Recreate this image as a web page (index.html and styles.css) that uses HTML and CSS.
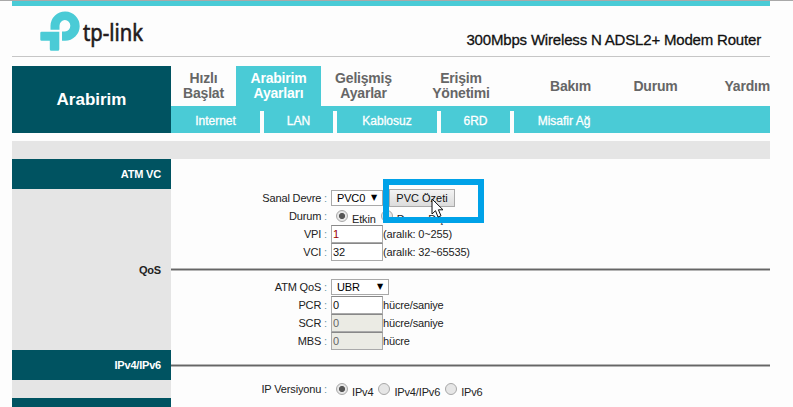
FILE: index.html
```html
<!DOCTYPE html>
<html lang="tr">
<head>
    <meta charset="UTF-8">
    <title>300Mbps Wireless N ADSL2+ Modem Router</title>
    <link rel="stylesheet" href="styles.css">
</head>
<body>
    <div class="page">
        <header class="banner">
            <svg class="logo" width="140" height="50" viewBox="0 0 140 50">
                <path fill="#4acbd6" d="M10.5 23.7V19.7A14.6 14.6 0 1 1 25 34.7H22V25.5H25A5.4 5.7 0 1 0 19.5 19.7V23.7Z"/>
                <path fill="#4acbd6" d="M1.5 25.7H19.3V43.3Q19.3 44.8 17.8 44.8H11.3Q9.8 44.8 9.8 43.3V34.7H1.5Q0.3 34.7 0.3 33.5V26.9Q0.3 25.7 1.5 25.7Z"/>
                <text x="43" y="35" textLength="60" lengthAdjust="spacingAndGlyphs" class="brand">tp-link</text>
            </svg>
            <span class="model">300Mbps Wireless N ADSL2+ Modem Router</span>
        </header>

        <div class="menu">
            <h1>Arabirim</h1>
            <div class="menu-right">
                <nav class="tabs">
                    <a class="quick">Hızlı<br>Başlat</a>
                    <a class="active">Arabirim<br>Ayarları</a>
                    <a class="advanced">Gelişmiş<br>Ayarlar</a>
                    <a class="access">Erişim<br>Yönetimi</a>
                    <a class="maintenance">Bakım</a>
                    <a class="status">Durum</a>
                    <a class="help">Yardım</a>
                </nav>
                <nav class="subtabs">
                    <a class="internet">Internet</a>
                    <a class="lan">LAN</a>
                    <a class="wireless">Kablosuz</a>
                    <a class="sixrd">6RD</a>
                    <a class="guest">Misafir Ağ</a>
                </nav>
            </div>
        </div>

        <div class="band"></div>

        <main>
            <aside>
                <div class="side-title">ATM VC</div>
                <div class="side-fill"><span>QoS</span></div>
                <div class="side-title">IPv4/IPv6</div>
                <div class="side-gap"></div>
                <div class="side-title"></div>
            </aside>
            <form>
                <section class="vc">
                    <div class="row">
                        <label>Sanal Devre <i>:</i></label>
                        <span class="select">PVC0<b>▼</b></span>
                        <button type="button">PVC Özeti</button>
                        <span class="highlight"></span>
                        <svg class="cursor" width="14" height="21" viewBox="0 0 14 21">
                            <path fill="#fff" stroke="#111" d="M1 1V16L4.5 12.7L7 19L10 17.8L7.4 11.8H12Z"/>
                        </svg>
                    </div>
                    <div class="row">
                        <label>Durum <i>:</i></label>
                        <input type="radio" name="state" checked><span class="option">Etkin</span>
                        <input type="radio" name="state"><span class="option">Devre Dışı</span>
                    </div>
                    <div class="row">
                        <label>VPI <i>:</i></label>
                        <input type="text" class="changed" value="1"><span>(aralık: 0~255)</span>
                    </div>
                    <div class="row">
                        <label>VCI <i>:</i></label>
                        <input type="text" value="32"><span>(aralık: 32~65535)</span>
                    </div>
                </section>
                <hr>
                <section class="qos">
                    <div class="row">
                        <label>ATM QoS <i>:</i></label>
                        <span class="select wide">UBR<b>▼</b></span>
                    </div>
                    <div class="row">
                        <label>PCR <i>:</i></label>
                        <input type="text" value="0"><span>hücre/saniye</span>
                    </div>
                    <div class="row">
                        <label>SCR <i>:</i></label>
                        <input type="text" value="0" disabled><span>hücre/saniye</span>
                    </div>
                    <div class="row">
                        <label>MBS <i>:</i></label>
                        <input type="text" value="0" disabled><span>hücre</span>
                    </div>
                </section>
                <hr>
                <section class="ip">
                    <div class="row">
                        <label>IP Versiyonu <i>:</i></label>
                        <input type="radio" name="ip" checked><span class="option">IPv4</span>
                        <input type="radio" name="ip"><span class="option">IPv4/IPv6</span>
                        <input type="radio" name="ip"><span class="option">IPv6</span>
                    </div>
                </section>
            </form>
        </main>
    </div>
</body>
</html>
```
FILE: styles.css
```css
* {
    box-sizing: border-box;
}

body {
    margin: 0;
    height: 407px;
    overflow: hidden;
    border-top: 1px solid #a9a9a9;
    background: #fdfdfd;
    font-family: "Liberation Sans", Arial, sans-serif;
    font-size: 11px;
    color: #222;
}

.page {
    width: 758px;
    margin-left: 12px;
}

/* Header */
.banner {
    display: flex;
    justify-content: space-between;
    height: 56px;
    border-top: 5px solid #4acbd6;
    border-bottom: 1px solid #c6c6c6;
}

.logo {
    margin-left: 28px;
}

.brand {
    font: 400 23px "Noto Sans", sans-serif;
    fill: #231a1c;
    stroke: #231a1c;
    stroke-width: 0.6px;
}

.model {
    margin: 25px 9px 0 0;
    font-size: 15px;
    line-height: 18px;
    letter-spacing: -0.18px;
    color: #111;
    -webkit-text-stroke: 0.3px #111;
}

/* Menu */
.menu {
    display: flex;
    height: 67px;
    margin-top: 9px;
}

h1 {
    width: 159px;
    margin: 0;
    background: #005361;
    color: #fff;
    font-size: 17px;
    line-height: 67px;
    text-align: center;
}

.menu-right {
    flex: 1;
}

.tabs {
    display: flex;
    align-items: center;
    height: 40px;
    color: #666;
    font-size: 14px;
    font-weight: bold;
    line-height: 15px;
    letter-spacing: -0.2px;
    text-align: center;
    white-space: nowrap;
}

.tabs a {
    flex: none;
}

.quick {
    width: 65px;
}

.tabs .active {
    width: 85px;
    height: 40px;
    padding-top: 5px;
    background: #4acbd6;
    color: #fff;
}

.advanced {
    width: 85px;
}

.access {
    width: 110px;
}

.maintenance {
    width: 109px;
}

.status {
    width: 61px;
}

.help {
    width: 84px;
    text-align: right;
}

.subtabs {
    display: flex;
    height: 27px;
    padding-top: 5px;
    background: #4acbd6;
    color: #fff;
    font-size: 12px;
    line-height: 21px;
    text-align: center;
    -webkit-text-stroke: 0.3px #fff;
}

.subtabs a {
    border-right: 4px solid #fdfdfd;
}

.internet {
    width: 93px;
}

.lan {
    width: 73px;
}

.wireless {
    width: 104px;
}

.sixrd {
    width: 73px;
}

.subtabs .guest {
    width: 100px;
    border: none;
}

.band {
    height: 18px;
    margin-top: 8px;
    background: #e5e5e5;
}

/* Content */
main {
    display: flex;
}

aside {
    width: 159px;
    background: #e5e5e5;
    font-weight: bold;
    letter-spacing: -0.2px;
    text-align: right;
}

.side-title {
    height: 30px;
    padding-right: 10px;
    background: #005361;
    color: #fff;
    line-height: 30px;
}

.side-fill {
    height: 161px;
    padding: 75px 10px 0 0;
    line-height: 12px;
}

.side-gap {
    height: 18px;
}

form {
    flex: 1;
}

hr {
    height: 3px;
    margin: 0;
    border: 1px solid #b5b5b5;
    border-width: 1px 0;
    background: #666;
}

.vc {
    height: 109px;
    padding-top: 30px;
}

.qos {
    height: 93px;
    padding-top: 7px;
}

.ip {
    padding-top: 13px;
}

.row {
    position: relative;
    display: flex;
    align-items: center;
    height: 18px;
    letter-spacing: -0.15px;
    white-space: nowrap;
}

label {
    width: 156px;
    margin-right: 4px;
    text-align: right;
}

label i {
    color: #6a98a5;
    font-style: normal;
}

.select {
    display: flex;
    justify-content: space-between;
    width: 52px;
    height: 16px;
    padding: 0 5px;
    border: 1px solid #a9a9a9;
    background: #fff;
    color: #000;
    line-height: 14px;
}

.select b {
    font-family: "DejaVu Sans", sans-serif;
    font-size: 8px;
    font-weight: normal;
}

.wide {
    width: 58px;
}

button {
    width: 66px;
    height: 18px;
    margin-left: 6px;
    padding: 0;
    border: 1px solid #aaa;
    background: linear-gradient(#f3f3f3, #dcdcdc);
    color: #111;
    font: inherit;
}

/* Frame drawn over the summary button */
.highlight {
    position: absolute;
    left: 212px;
    top: -10px;
    width: 101px;
    height: 44px;
    border: 6px solid #00a2e8;
    z-index: 1;
}

.cursor {
    position: absolute;
    left: 260px;
    top: 9px;
    z-index: 2;
}

input[type="text"] {
    width: 52px;
    height: 18px;
    padding: 0 0 0 1px;
    border: 1px solid #aaa;
    border-top-color: #888;
    background: #fff;
    color: #111;
    font: inherit;
}

input[type="text"]:disabled {
    background: #ebebe4;
    color: #666;
}

input.changed {
    color: #900;
}

input[type="radio"] {
    appearance: none;
    flex: none;
    width: 12px;
    height: 12px;
    margin: 0 4px 0 5px;
    border: 1px solid #a8a8a8;
    border-radius: 50%;
    background: #e6e6e6;
}

input[type="radio"]:checked {
    background: radial-gradient(circle, #555 0 2.7px, #e6e6e6 3.4px);
}

.option {
    padding-top: 5px;
}
```
